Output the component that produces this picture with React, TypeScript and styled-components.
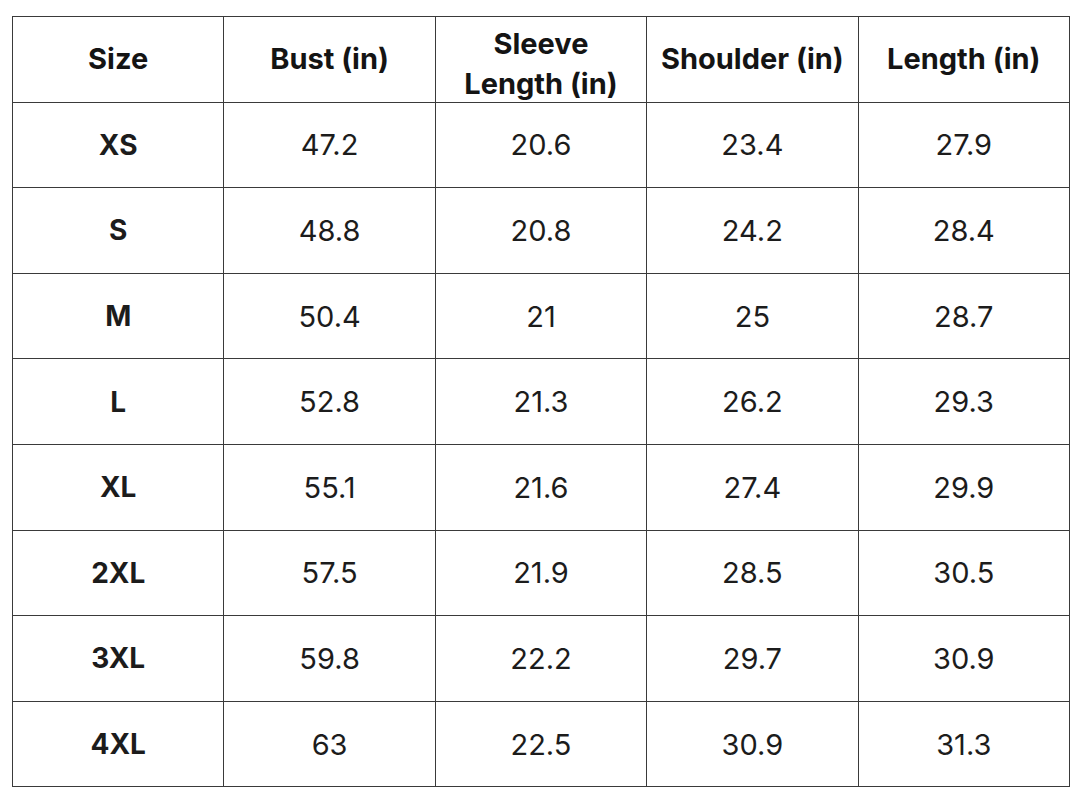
import styled, { createGlobalStyle } from 'styled-components';

const GlobalStyle = createGlobalStyle`
  html, body {
    margin: 0;
    padding: 0;
    background: #fff;
  }
  body {
    font-family: Inter, "Open Sans", "Liberation Sans", sans-serif;
  }
`;

const Page = styled.div`
  padding: 16px 0 0 12px;
  width: 1080px;
  height: 800px;
  box-sizing: border-box;
`;

const Table = styled.table`
  border-collapse: collapse;
  table-layout: fixed;
  width: 1058px;
`;

const HeadCell = styled.th`
  border: 1px solid #3a3a3a;
  height: 84.6px;
  padding: 0;
  text-align: center;
  vertical-align: middle;
  font-size: 29px;
  font-weight: 700;
  line-height: 40px;
  color: #141414;
`;

// two-line header sits a little lower in its cell
const StackedLabel = styled.span`
  display: block;
  transform: translateY(5px);
`;

const Cell = styled.td<{ $bold?: boolean }>`
  border: 1px solid #3a3a3a;
  height: 84.6px;
  padding: 0;
  text-align: center;
  vertical-align: middle;
  font-size: ${({ $bold }) => ($bold ? '28px' : '29px')};
  font-weight: ${({ $bold }) => ($bold ? 700 : 400)};
  color: #1c1c1c;
`;

const headers = ['Size', 'Bust (in)', 'Sleeve Length (in)', 'Shoulder (in)', 'Length (in)'];

const rows = [
  ['XS', '47.2', '20.6', '23.4', '27.9'],
  ['S', '48.8', '20.8', '24.2', '28.4'],
  ['M', '50.4', '21', '25', '28.7'],
  ['L', '52.8', '21.3', '26.2', '29.3'],
  ['XL', '55.1', '21.6', '27.4', '29.9'],
  ['2XL', '57.5', '21.9', '28.5', '30.5'],
  ['3XL', '59.8', '22.2', '29.7', '30.9'],
  ['4XL', '63', '22.5', '30.9', '31.3'],
];

export default function App() {
  return (
    <>
      <GlobalStyle />
      <Page>
        <Table>
          <thead>
            <tr>
              {headers.map((h) => (
                <HeadCell key={h}>
                  {h === 'Sleeve Length (in)' ? (
                    <StackedLabel>
                      Sleeve
                      <br />
                      Length (in)
                    </StackedLabel>
                  ) : (
                    h
                  )}
                </HeadCell>
              ))}
            </tr>
          </thead>
          <tbody>
            {rows.map((r) => (
              <tr key={r[0]}>
                {r.map((v, i) => (
                  <Cell key={i} $bold={i === 0}>
                    {v}
                  </Cell>
                ))}
              </tr>
            ))}
          </tbody>
        </Table>
      </Page>
    </>
  );
}
